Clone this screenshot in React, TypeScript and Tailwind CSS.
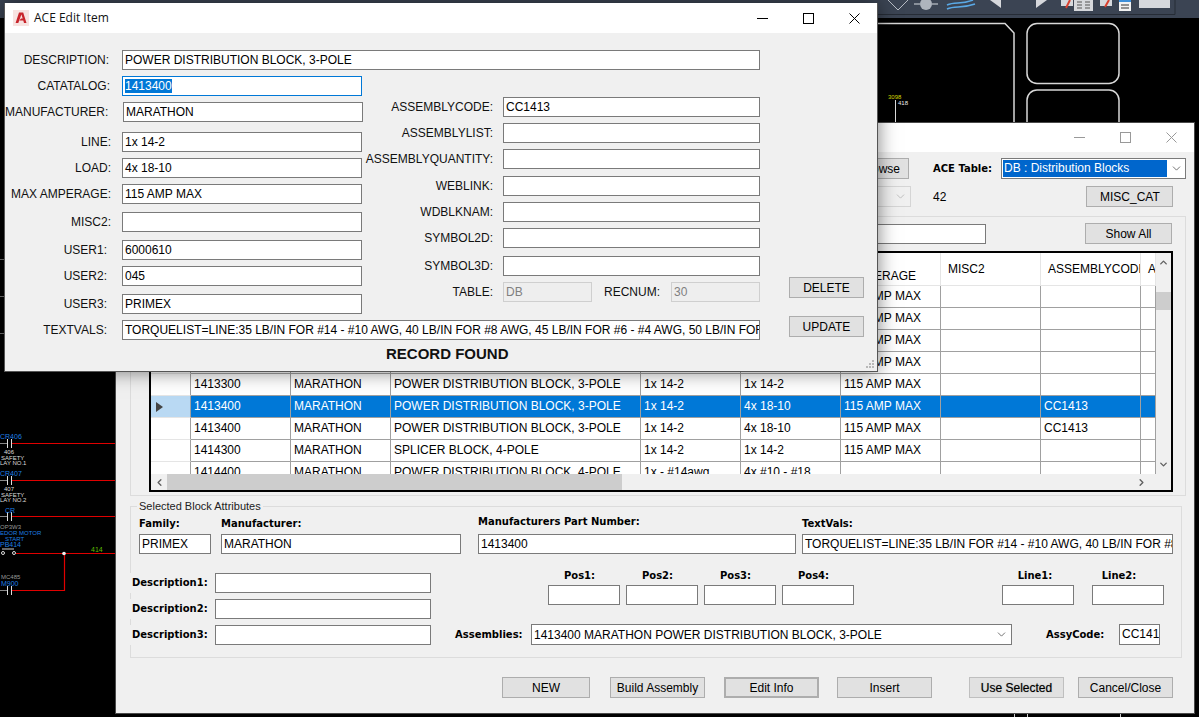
import { ChevronDown, ChevronLeft, ChevronRight, ChevronUp } from "lucide-react";

const cols = ["w-[100px]", "w-[100px]", "w-[250px]", "w-[100px]", "w-[100px]", "w-[100px]", "w-[100px]", "w-[100px]", "w-[15px]"];

const rows = [
  ["1413100", "MARATHON", "POWER DISTRIBUTION BLOCK, 3-POLE", "1x 14-2", "1x 14-2", "115 AMP MAX", "", "", ""],
  ["1413100", "MARATHON", "POWER DISTRIBUTION BLOCK, 3-POLE", "1x 14-2", "1x 14-2", "115 AMP MAX", "", "", ""],
  ["1413200", "MARATHON", "POWER DISTRIBUTION BLOCK, 3-POLE", "1x 14-2", "1x 14-2", "115 AMP MAX", "", "", ""],
  ["1413200", "MARATHON", "POWER DISTRIBUTION BLOCK, 3-POLE", "1x 14-2", "1x 14-2", "115 AMP MAX", "", "", ""],
  ["1413300", "MARATHON", "POWER DISTRIBUTION BLOCK, 3-POLE", "1x 14-2", "1x 14-2", "115 AMP MAX", "", "", ""],
  ["1413400", "MARATHON", "POWER DISTRIBUTION BLOCK, 3-POLE", "1x 14-2", "4x 18-10", "115 AMP MAX", "", "CC1413", ""],
  ["1413400", "MARATHON", "POWER DISTRIBUTION BLOCK, 3-POLE", "1x 14-2", "4x 18-10", "115 AMP MAX", "", "CC1413", ""],
  ["1414300", "MARATHON", "SPLICER BLOCK, 4-POLE", "1x 14-2", "1x 14-2", "115 AMP MAX", "", "", ""],
  ["1414400", "MARATHON", "POWER DISTRIBUTION BLOCK, 4-POLE", "1x - #14awg", "4x #10 - #18", "", "", "", ""],
];

const Box = ({ value, className = "" }: { value?: string; className?: string }) => (
  <div className={`h-5 shrink-0 overflow-hidden whitespace-nowrap border border-[#7a7a7a] bg-white pl-[2px] text-[12px] leading-[18px] text-black ${className}`}>
    {value}
  </div>
);

const Bold = ({ children, className = "" }: { children: React.ReactNode; className?: string }) => (
  <div className={`whitespace-nowrap font-['DejaVu_Sans',sans-serif] text-[10px] font-bold leading-[13px] text-black ${className}`}>
    {children}
  </div>
);

const Btn = ({ children, className = "" }: { children: React.ReactNode; className?: string }) => (
  <div className={`flex h-[21px] shrink-0 items-center justify-center border border-[#adadad] bg-[#e1e1e1] text-[12px] text-black ${className}`}>
    {children}
  </div>
);

const Row = ({ label, value, labelW, className = "", boxW = "w-[240px]" }: { label: string; value?: string; labelW: string; className?: string; boxW?: string }) => (
  <div className={`flex h-5 items-center ${className}`}>
    <div className={`shrink-0 whitespace-nowrap text-right text-[12px] text-[#111] ${labelW}`}>{label}</div>
    <Box value={value} className={boxW} />
  </div>
);

const WinControls = ({ color }: { color: string }) => (
  <div className="flex h-full" style={{ color }}>
    <div className="flex w-[46px] items-center justify-center">
      <svg width="11" height="11" viewBox="0 0 11 11"><path d="M0 5.5h11" stroke="currentColor" /></svg>
    </div>
    <div className="flex w-[46px] items-center justify-center">
      <svg width="11" height="11" viewBox="0 0 11 11"><rect x="0.5" y="0.5" width="10" height="10" fill="none" stroke="currentColor" /></svg>
    </div>
    <div className="flex w-[46px] items-center justify-center">
      <svg width="11" height="11" viewBox="0 0 11 11"><path d="M0.5 0.5l10 10M10.5 0.5l-10 10" stroke="currentColor" /></svg>
    </div>
  </div>
);

const PosField = ({ label, labelClass = "pr-[9px]" }: { label: string; labelClass?: string }) => (
  <div className="flex w-[72px] flex-col">
    <Bold className={`mb-[3px] text-center ${labelClass}`}>{label}</Bold>
    <Box className="w-[72px]" />
  </div>
);

// cad drawing behind the windows
const Drawing = () => (
  <svg className="absolute left-0 top-0" width="1199" height="717" viewBox="0 0 1199 717" fontFamily="'Liberation Sans', sans-serif">
    <rect x="0" y="0" width="1199" height="18" fill="#3b4453" />
    <path d="M877 14.5H1175V0" stroke="#262c36" fill="none" />
    <path d="M888 0l10 10M908 0l-10 10" stroke="#d8dce2" strokeWidth="0.8" fill="none" />
    <circle cx="926" cy="4" r="6" fill="#aeb4bd" />
    <path d="M914 4h6M932 4h6" stroke="#d8dce2" />
    <path d="M947 5c8-4 14 0 26-5M947 9c8-4 14 0 28-5" stroke="#5aa9e6" strokeWidth="1.5" fill="none" />
    <path d="M1001 0v8l-11-8zM1036 0v8l11-8z" fill="#d6d8dc" />
    <rect x="1061" y="0" width="12" height="6" fill="#d6d8dc" />
    <path d="M1066 8l4-8" stroke="#d9402e" strokeWidth="2" />
    <rect x="1074" y="0" width="19" height="11" fill="#d6d8dc" />
    <path d="M1077 2h5M1085 2h5M1077 5h5M1085 5h5M1077 8h5M1085 8h5" stroke="#555" />
    <rect x="1100" y="0" width="12" height="6" fill="#d6d8dc" />
    <path d="M1105 7l4-7" stroke="#d9402e" strokeWidth="2" />
    <rect x="1119" y="0" width="12" height="11" fill="#f2f2f2" />
    <path d="M1119 1h12" stroke="#3d8fd9" strokeWidth="2" />
    <path d="M1121 5h8M1121 8h8" stroke="#333" />
    <rect x="1139" y="0" width="31" height="8" fill="#d6d8dc" />

    <path d="M877 23.5H1005L1014 33V122" stroke="#d8d8d8" strokeWidth="1.5" fill="none" />
    <rect x="1027" y="23.5" width="92" height="60" rx="10" stroke="#d8d8d8" strokeWidth="1.5" fill="none" />
    <path d="M1027 122V100a10 10 0 0 1 10-10h72a10 10 0 0 1 10 10v22" stroke="#d8d8d8" strokeWidth="1.5" fill="none" />
    <text x="888" y="99" fontSize="6" fill="#d8d800">3098</text>
    <text x="898" y="105" fontSize="6" fill="#eee">418</text>
    <path d="M895.5 100V122" stroke="#ddd" />

    <path d="M0 259.5h5M0 296.5h5M0 333.5h5" stroke="#777" />
    <path d="M12 443.5H115M12 480.5H115M12 516.5H115M16 553.5H115M64.5 553V590.5H12" stroke="#e00000" strokeWidth="1.2" fill="none" />
    <path d="M0 443.5h7M0 480.5h7M0 516.5h7M0 590.5h7" stroke="#888" />
    <path d="M7.5 439v9M11.5 439v9M7.5 476v9M11.5 476v9M7.5 512v9M11.5 512v9M7.5 586v9M11.5 586v9" stroke="#ddd" />
    <path d="M2 549h12" stroke="#ccc" />
    <circle cx="3" cy="553" r="1.5" stroke="#ddd" fill="none" />
    <circle cx="14" cy="553" r="1.5" stroke="#ddd" fill="none" />
    <circle cx="64" cy="553.5" r="1.8" fill="#eee" />

    <text x="0" y="439" fontSize="7" fill="#1e7fe0">CR406</text>
    <text x="4" y="454" fontSize="6" fill="#ddd">406</text>
    <text x="1" y="460" fontSize="6" fill="#ddd">SAFETY</text>
    <text x="0" y="465" fontSize="6" fill="#ddd">LAY NO.1</text>
    <text x="0" y="476" fontSize="7" fill="#1e7fe0">CR407</text>
    <text x="4" y="491" fontSize="6" fill="#ddd">407</text>
    <text x="1" y="497" fontSize="6" fill="#ddd">SAFETY</text>
    <text x="0" y="502" fontSize="6" fill="#ddd">LAY NO.2</text>
    <text x="5" y="513" fontSize="7" fill="#1e7fe0">CR</text>
    <text x="0" y="529" fontSize="6" fill="#999">OP3W3</text>
    <text x="0" y="535" fontSize="6" fill="#1e7fe0">EDOR MOTOR</text>
    <text x="5" y="541" fontSize="6" fill="#1e7fe0">START</text>
    <text x="0" y="547" fontSize="7" fill="#1e7fe0">PB414</text>
    <text x="91" y="552" fontSize="7" fill="#5fbf00">414</text>
    <text x="1" y="579" fontSize="6" fill="#999">MC485</text>
    <text x="1" y="586" fontSize="7" fill="#1e7fe0">M900</text>
    <path d="M1014.5 714v3M1027.5 714v3M1120.5 714v3" stroke="#ccc" />
  </svg>
);

const Grid = () => (
  <div className="ml-[18px] mt-[7px] flex h-[241px] w-[1024px] flex-col border-2 border-black bg-[#f0f0f0]">
    <div className="flex h-[221px]">
      <div className="h-[221px] w-[1005px] overflow-hidden">
        <div className="flex h-[33px] border-b border-[#e5e5e5] bg-white">
          <div className="w-10 shrink-0 border-r border-[#e5e5e5]" />
          {["CATALOG", "MANUFACTURER", "DESCRIPTION", "LINE", "LOAD", "MAX AMPERAGE", "MISC2", "ASSEMBLYCODE", "A"].map((h, i) => (
            <div key={h} className={`flex shrink-0 items-center overflow-hidden border-r border-[#e5e5e5] pl-[7px] leading-[13px] ${cols[i]} ${i === 5 ? "pt-[1px]" : ""}`}>
              {h}
            </div>
          ))}
        </div>
        {rows.map((r, n) => {
          const sel = n === 5;
          return (
            <div key={n} className={`flex h-[22px] ${sel ? "bg-[#0078d7] text-white" : "bg-white text-black"}`}>
              <div className={`flex w-10 shrink-0 items-center border-b border-r border-b-[#e5e5e5] border-r-[#a0a0a0] pl-[5px] ${sel ? "bg-[#b9d9f3]" : "bg-white"}`}>
                {sel && (
                  <svg width="7" height="10" viewBox="0 0 7 10"><path d="M0 0l7 5-7 5z" fill="#444" /></svg>
                )}
              </div>
              {r.map((c, i) => (
                <div key={i} className={`shrink-0 overflow-hidden whitespace-nowrap border-b border-r border-[#a0a0a0] pl-[3px] leading-[21px] ${cols[i]}`}>
                  {c}
                </div>
              ))}
            </div>
          );
        })}
      </div>
      <div className="flex w-[15px] flex-col items-center justify-between bg-[#f0f0f0] py-[4px] text-[#606060]">
        <ChevronUp size={11} strokeWidth={3} />
        <div className="-mt-[126px] h-[18px] w-[15px] bg-[#cdcdcd]" />
        <ChevronDown size={11} strokeWidth={3} />
      </div>
    </div>
    <div className="flex h-4 items-center bg-[#f0f0f0] text-[#606060]">
      <div className="flex w-4 justify-center"><ChevronLeft size={11} strokeWidth={3} /></div>
      <div className="h-4 w-[455px] bg-[#cdcdcd]" />
      <div className="ml-auto flex w-[38px] justify-start pl-[3px]"><ChevronRight size={11} strokeWidth={3} /></div>
    </div>
  </div>
);

const BackWindow = () => (
  <div className="absolute left-[115px] top-[122px] h-[592px] w-[1080px] border border-[#4a4a4a] bg-[#f0f0f0]">
    <div className="flex h-[29px] justify-end bg-white">
      <WinControls color="#999999" />
    </div>

    <div className="ml-[735px] mt-[6px] flex items-center">
      <Btn className="w-[58px]">Browse</Btn>
      <Bold className="ml-6 w-[68px]">ACE Table:</Bold>
      <div className="flex h-[21px] w-[185px] items-center border border-[#7a7a7a] bg-white pl-px">
        <div className="h-[17px] w-[164px] bg-[#0066cc] pl-px text-[12px] leading-[17px] text-white">DB : Distribution Blocks</div>
        <ChevronDown size={13} strokeWidth={1.5} className="ml-[3px] text-[#555]" />
      </div>
    </div>

    <div className="mt-[7px] flex h-[21px] items-center">
      <div className="ml-[584px] flex h-[21px] w-[211px] items-center justify-end border border-[#d5d5d5] pr-[3px]">
        <ChevronDown size={13} strokeWidth={1.5} className="text-[#b5b5b5]" />
      </div>
      <div className="ml-[22px] text-[12px] text-black">42</div>
      <Btn className="ml-[140px] w-[87px]">MISC_CAT</Btn>
    </div>

    <div className="ml-[14px] mt-[9px] h-[280px] w-[1056px] border border-[#dcdcdc]">
      <div className="mt-[6px] flex items-center">
        <Box className="ml-[469px] w-[386px]" />
        <Btn className="ml-[99px] w-[87px]">Show All</Btn>
      </div>
      <Grid />
    </div>

    <div className="relative ml-[14px] mt-[10px] h-[152px] w-[1052px] border border-[#dcdcdc]">
      <div className="absolute -top-[7px] left-[6px] bg-[#f0f0f0] px-[2px] text-[11px] leading-[13px] text-[#222]">Selected Block Attributes</div>
      <div className="flex pt-[8px]">
        <div className="ml-[8px] flex h-[39px] w-[72px] flex-col justify-end">
          <Bold className="mb-[4px]">Family:</Bold>
          <Box value="PRIMEX" className="w-[72px]" />
        </div>
        <div className="ml-[10px] flex h-[39px] w-[240px] flex-col justify-end">
          <Bold className="mb-[4px]">Manufacturer:</Bold>
          <Box value="MARATHON" className="w-[240px]" />
        </div>
        <div className="ml-[17px] flex h-[39px] w-[318px] flex-col justify-end">
          <Bold className="mb-[6px]">Manufacturers Part Number:</Bold>
          <Box value="1413400" className="w-[318px]" />
        </div>
        <div className="ml-[6px] flex h-[39px] w-[371px] flex-col justify-end">
          <Bold className="mb-[4px]">TextVals:</Bold>
          <Box value="TORQUELIST=LINE:35 LB/IN FOR #14 - #10 AWG, 40 LB/IN FOR #8 AWG, 45 LB/IN FOR #6" className="w-[371px]" />
        </div>
      </div>

      <div className="mt-[19px] flex">
        <div className="flex flex-col gap-[6px]">
          {["Description1:", "Description2:", "Description3:"].map((d) => (
            <div key={d} className="flex h-5 items-center">
              <Bold className="-ml-[3px] h-[20px] w-[87px] bg-[#f0f0f0] pl-[4px] leading-[20px]">{d}</Bold>
              <Box className="w-[216px]" />
            </div>
          ))}
        </div>
        <div className="-mt-[4px] flex flex-col">
          <div className="flex h-9">
            <div className="ml-[117px] flex gap-[6px]">
              <PosField label="Pos1:" />
              <PosField label="Pos2:" />
              <PosField label="Pos3:" />
              <PosField label="Pos4:" />
            </div>
            <div className="ml-[148px] flex gap-[18px]">
              <PosField label="Line1:" labelClass="pr-[6px]" />
              <PosField label="Line2:" labelClass="pr-[18px]" />
            </div>
          </div>
          <div className="mt-[19px] flex h-[21px] items-center">
            <Bold className="ml-[24px] w-[76px] text-[#ff0000]">Assemblies:</Bold>
            <div className="flex h-[21px] w-[481px] items-center border border-[#7a7a7a] bg-white pl-[2px] text-[12px]">
              <span>1413400 MARATHON POWER DISTRIBUTION BLOCK, 3-POLE</span>
              <ChevronDown size={13} strokeWidth={1.5} className="ml-auto mr-[3px] text-[#555]" />
            </div>
            <Bold className="ml-[34px] w-[73px]">AssyCode:</Bold>
            <div className="h-[21px] w-[41px] overflow-hidden whitespace-nowrap border border-[#7a7a7a] bg-white pl-[2px] text-[12px] leading-[19px]">CC1413</div>
          </div>
        </div>
      </div>
    </div>

    <div className="ml-[386px] mt-[19px] flex">
      <Btn className="w-[88px]">NEW</Btn>
      <Btn className="ml-[20px] w-[95px]">Build Assembly</Btn>
      <Btn className="ml-[19px] w-[95px] border-2 border-[#0078d7]">Edit Info</Btn>
      <Btn className="ml-[18px] w-[95px]">Insert</Btn>
      <Btn className="ml-[37px] w-[95px] border-[#bfbfbf] bg-[#cccccc] text-[#f4f4f4] [text-shadow:0_0_1px_#777]">Use Selected</Btn>
      <Btn className="ml-[14px] w-[95px]">Cancel/Close</Btn>
    </div>
  </div>
);

const FrontWindow = () => (
  <div className="absolute left-[4px] top-[3px] h-[369px] w-[874px] border-x border-b border-[#555555] bg-[#f0f0f0] shadow-[0_0_18px_rgba(0,0,0,0.5)]">
    <div className="flex h-[30px] items-center bg-white">
      <div className="ml-[8px] flex h-4 w-4 items-center justify-center bg-[#f7e3e1]">
        <svg width="12" height="12" viewBox="0 0 12 12"><path d="M4 0.5h4.2L11.5 11H9l-.7-2.4H4.4L6 6.4h1.7L6.4 2.4 3.3 11H.6z" fill="#c8242b" /></svg>
      </div>
      <div className="ml-[5px] font-['Open_Sans',sans-serif] text-[12px] text-[#111]">ACE Edit Item</div>
      <div className="ml-auto h-full"><WinControls color="#000000" /></div>
    </div>

    <Row label="DESCRIPTION:" value="POWER DISTRIBUTION BLOCK, 3-POLE" labelW="w-[104px] mr-[13px]" boxW="w-[638px]" className="mt-[17px]" />

    <div className="mt-[6px] flex h-[238px]">
      <div className="w-[357px] shrink-0">
        <div className="flex h-5 items-center">
          <div className="mr-[12px] w-[105px] text-right text-[12px] text-[#111]">CATATALOG:</div>
          <div className="h-5 w-[240px] border border-[#0078d7] bg-white pl-[2px] text-[12px] leading-[18px]">
            <span className="bg-[#0078d7] text-white">1413400</span>
          </div>
        </div>
        <Row label="MANUFACTURER:" value="MARATHON" labelW="w-[103px] mr-[15px]" className="mt-[6px]" />
        <Row label="LINE:" value="1x 14-2" labelW="w-[106px] mr-[11px]" className="mt-[10px]" />
        <Row label="LOAD:" value="4x 18-10" labelW="w-[106px] mr-[11px]" className="mt-[6px]" />
        <Row label="MAX AMPERAGE:" value="115 AMP MAX" labelW="w-[106px] mr-[11px]" className="mt-[6px]" />
        <Row label="MISC2:" labelW="w-[106px] mr-[11px]" className="mt-[8px]" />
        <Row label="USER1:" value="6000610" labelW="w-[102px] mr-[15px]" className="mt-[8px]" />
        <Row label="USER2:" value="045" labelW="w-[102px] mr-[15px]" className="mt-[6px]" />
        <Row label="USER3:" value="PRIMEX" labelW="w-[102px] mr-[15px]" className="mt-[8px]" />
      </div>

      <div className="mt-[21px] w-[398px] shrink-0">
        <Row label="ASSEMBLYCODE:" value="CC1413" labelW="w-[131px] mr-[10px]" boxW="w-[257px]" />
        <Row label="ASSEMBLYLIST:" labelW="w-[131px] mr-[10px]" boxW="w-[257px]" className="mt-[6px]" />
        <Row label="ASSEMBLYQUANTITY:" labelW="w-[131px] mr-[10px]" boxW="w-[257px]" className="mt-[6px]" />
        <Row label="WEBLINK:" labelW="w-[131px] mr-[10px]" boxW="w-[257px]" className="mt-[7px]" />
        <Row label="WDBLKNAM:" labelW="w-[131px] mr-[10px]" boxW="w-[257px]" className="mt-[6px]" />
        <Row label="SYMBOL2D:" labelW="w-[131px] mr-[10px]" boxW="w-[257px]" className="mt-[6px]" />
        <Row label="SYMBOL3D:" labelW="w-[131px] mr-[10px]" boxW="w-[257px]" className="mt-[8px]" />
        <div className="mt-[6px] flex h-5 items-center">
          <div className="mr-[10px] w-[131px] text-right text-[12px] text-[#111]">TABLE:</div>
          <div className="h-5 w-[89px] border border-[#cfcfcf] bg-[#eeeeee] pl-[2px] text-[12px] leading-[18px] text-[#808080]">DB</div>
          <div className="w-[68px] text-right text-[12px] text-[#111]">RECNUM:</div>
          <div className="ml-[11px] h-5 w-[89px] border border-[#cfcfcf] bg-[#eeeeee] pl-[2px] text-[12px] leading-[18px] text-[#808080]">30</div>
        </div>
      </div>

      <div className="ml-[29px] mt-[201px] flex w-[75px] flex-col gap-[18px]">
        <Btn className="w-[75px]">DELETE</Btn>
        <Btn className="w-[75px]">UPDATE</Btn>
      </div>
    </div>

    <Row label="TEXTVALS:" value="TORQUELIST=LINE:35 LB/IN FOR #14 - #10 AWG, 40 LB/IN FOR #8 AWG, 45 LB/IN FOR #6 - #4 AWG, 50 LB/IN FOR #2 AWG" labelW="w-[102px] mr-[15px]" boxW="w-[638px]" className="mt-[6px]" />

    <div className="ml-[381px] mt-[5px] text-[15px] font-bold leading-[18px] text-[#111]">RECORD FOUND</div>

    <svg className="absolute bottom-[2px] right-[2px]" width="9" height="9" viewBox="0 0 9 9">
      <path d="M6 0h2v2H6zM3 3h2v2H3zM6 3h2v2H6zM0 6h2v2H0zM3 6h2v2H3zM6 6h2v2H6z" fill="#b8b8b8" />
    </svg>
  </div>
);

export default function App() {
  return (
    <div className="relative h-[717px] w-[1199px] overflow-hidden bg-black font-['Liberation_Sans',sans-serif] text-[12px]">
      <Drawing />
      <BackWindow />
      <FrontWindow />
    </div>
  );
}
